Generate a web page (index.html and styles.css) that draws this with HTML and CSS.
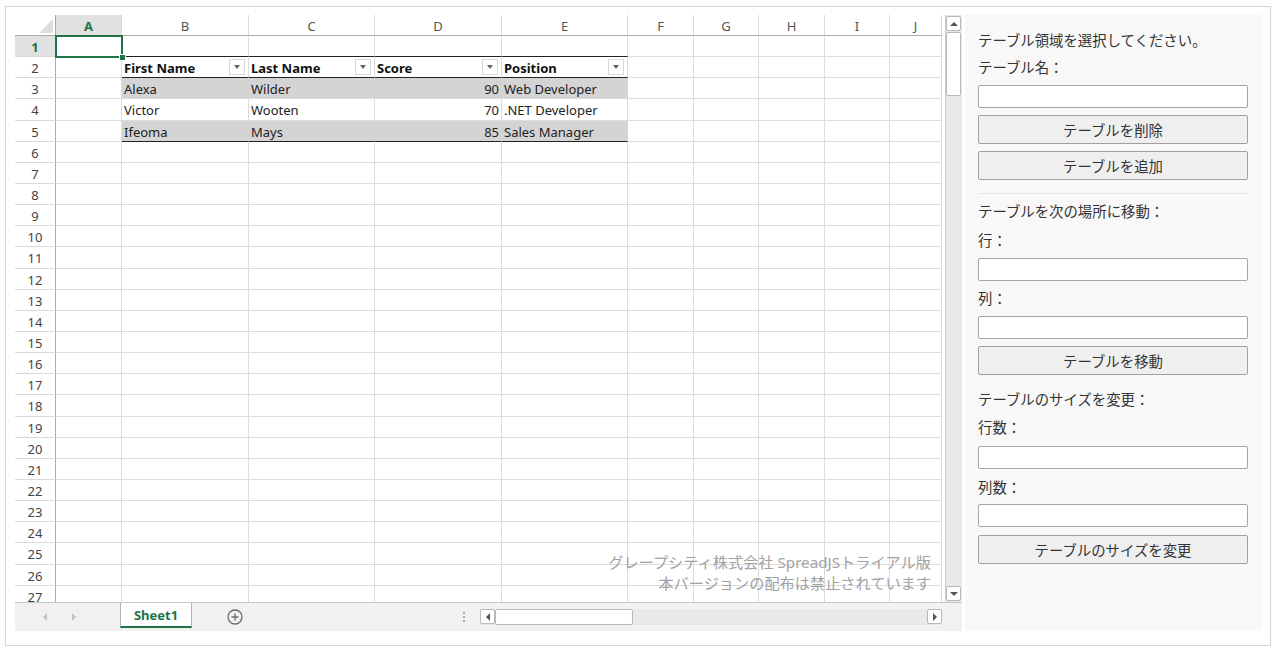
FILE: index.html
```html
<!DOCTYPE html>
<html lang="ja">
<head>
  <meta charset="UTF-8" />
  <meta name="viewport" content="width=device-width, initial-scale=1.0"/>
  <title>テーブルの操作</title>
  <link rel="stylesheet" href="styles.css">
</head>
<body>
  <div class="frame">
    <div class="spread">
      <div class="sheet-area">
        <div class="viewport">
          <div class="grid" id="grid">
            <div class="selection"><span class="handle"></span></div>
          </div>
          <div class="watermark">グレープシティ株式会社 SpreadJSトライアル版<br>本バージョンの配布は禁止されています</div>
        </div>
        <div class="vscroll">
          <div class="sb-btn"><span class="tri up"></span></div>
          <div class="sb-thumb vthumb"></div>
          <div class="sb-track"></div>
          <div class="sb-btn"><span class="tri down"></span></div>
        </div>
      </div>

      <div class="tabbar">
        <div class="tab-nav">
          <span class="tri left light"></span>
          <span class="tri right light"></span>
        </div>
        <div class="tab active-tab">Sheet1</div>
        <div class="tab-add">
          <svg width="16" height="16" viewBox="0 0 16 16">
            <circle cx="8" cy="8" r="7" fill="none" stroke="#6b6b6b" stroke-width="1.3"/>
            <path d="M8 4.5v7M4.5 8h7" stroke="#6b6b6b" stroke-width="1.3"/>
          </svg>
        </div>
        <div class="tab-space"></div>
        <div class="splitter"><i></i><i></i><i></i></div>
        <div class="hscroll">
          <div class="sb-btn"><span class="tri left"></span></div>
          <div class="sb-thumb hthumb"></div>
          <div class="sb-track"></div>
          <div class="sb-btn"><span class="tri right"></span></div>
        </div>
      </div>
    </div>

    <div class="panel">
      <div class="label first">テーブル領域を選択してください。</div>
      <div class="label">テーブル名：</div>
      <input type="text" class="field" />
      <button class="btn">テーブルを削除</button>
      <button class="btn">テーブルを追加</button>
      <hr class="divider" />
      <div class="label">テーブルを次の場所に移動：</div>
      <div class="label gap">行：</div>
      <input type="text" class="field" />
      <div class="label">列：</div>
      <input type="text" class="field" />
      <button class="btn">テーブルを移動</button>
      <div class="label section">テーブルのサイズを変更：</div>
      <div class="label wide">行数：</div>
      <input type="text" class="field wide" />
      <div class="label wide">列数：</div>
      <input type="text" class="field tight" />
      <button class="btn wide">テーブルのサイズを変更</button>
    </div>
  </div>

  <script>
    // table B2:E5
    const tableData = {
      2: ["First Name", "Last Name", "Score", "Position"],
      3: ["Alexa", "Wilder", "90", "Web Developer"],
      4: ["Victor", "Wooten", "70", ".NET Developer"],
      5: ["Ifeoma", "Mays", "85", "Sales Manager"]
    };
    const letters = "ABCDEFGHIJ";
    const grid = document.getElementById("grid");

    function makeRow(cls) {
      const row = document.createElement("div");
      row.className = "grid-row " + cls;
      grid.appendChild(row);
      return row;
    }

    function makeCell(row, cls, text) {
      const cell = document.createElement("div");
      cell.className = cls;
      if (text !== undefined) cell.textContent = text;
      row.appendChild(cell);
      return cell;
    }

    // column header
    const head = makeRow("head-row");
    makeCell(head, "corner");
    for (let c = 0; c < letters.length; c++) {
      makeCell(head, "hdr-col" + (c === 0 ? " active" : ""), letters[c]);
    }

    for (let r = 1; r <= 27; r++) {
      const row = makeRow("body-row");
      makeCell(row, "hdr-row" + (r === 1 ? " active" : ""), r);

      for (let c = 0; c < letters.length; c++) {
        let cls = "cell";
        const inTable = c >= 1 && c <= 4;
        let text;

        if (inTable && r === 1) cls += " t-top";
        if (inTable && tableData[r]) {
          text = tableData[r][c - 1];
          if (r === 2) cls += " t-head";
          if (r === 3 || r === 5) cls += " t-band";
          if (r === 2 || r === 5) cls += " t-bottom";
          if (c === 3 && r > 2) cls += " num";
        }

        const cell = makeCell(row, cls, text);
        if (inTable && r === 2) {
          const btn = document.createElement("span");
          btn.className = "filter";
          cell.appendChild(btn);
        }
      }
    }
  </script>
</body>
</html>
```

FILE: styles.css
```css
body {
  margin: 0;
  background: #fff;
  font-family: "Noto Sans", "Noto Sans CJK JP", sans-serif;
  color: #222;
}

.frame {
  margin: 6px 0 0 5px;
  width: 1266px;
  height: 640px;
  box-sizing: border-box;
  border: 1px solid #d6d6d6;
  padding: 8px 0 0 9px;
  display: flex;
}

/* spreadsheet */

.spread {
  width: 947px;
  height: 616px;
  display: flex;
  flex-direction: column;
}

.sheet-area {
  display: flex;
  height: 587px;
}

.viewport {
  position: relative;
  width: 930px;
  overflow: hidden;
  background: #fff;
}

.grid {
  position: relative;
}

.grid-row {
  display: grid;
  grid-template-columns: 41px 66px 127px 126px 127px 126px 66px 65px 66px 65px 52px;
}

.head-row {
  height: 21px;
}

.body-row {
  height: 21.15px;
}

.grid-row > div {
  box-sizing: border-box;
  font-size: 13px;
  display: flex;
  align-items: center;
  white-space: nowrap;
  overflow: hidden;
}

.body-row > div {
  padding-top: 2px;
}

.corner {
  position: relative;
  border-right: 1px solid #ababab;
  border-bottom: 1px solid #ababab;
}

.corner::after {
  content: "";
  position: absolute;
  right: 2px;
  bottom: 2px;
  border-left: 14px solid transparent;
  border-bottom: 14px solid #dedede;
}

.hdr-col {
  justify-content: center;
  color: #555;
  padding-top: 1px;
  border-right: 1px solid #dadada;
  border-bottom: 1px solid #ababab;
}

.hdr-row {
  justify-content: center;
  color: #444;
  border-right: 1px solid #ababab;
  border-bottom: 1px solid #dadada;
}

.hdr-col.active,
.hdr-row.active {
  background: #e1e1e1;
  color: #217346;
  font-weight: bold;
}

.cell {
  padding: 0 2px;
  border-right: 1px solid #dcdcdc;
  border-bottom: 1px solid #dcdcdc;
  position: relative;
}

.cell.t-top {
  border-bottom-color: #222;
}

.cell.t-head {
  font-weight: bold;
  color: #111;
}

.cell.t-band {
  background: #d4d4d4;
  border-right-color: #d4d4d4;
}

.cell.t-bottom {
  border-bottom-color: #222;
}

.cell.num {
  justify-content: flex-end;
}

.filter {
  position: absolute;
  right: 3px;
  top: 2px;
  width: 16px;
  height: 16px;
  box-sizing: border-box;
  background: #fff;
  border: 1px solid #d8d8d8;
}

.filter::after {
  content: "";
  position: absolute;
  left: 4px;
  top: 5px;
  border-left: 3.5px solid transparent;
  border-right: 3.5px solid transparent;
  border-top: 4px solid #666;
}

.selection {
  position: absolute;
  left: 40px;
  top: 20px;
  width: 68px;
  height: 23px;
  box-sizing: border-box;
  border: 2px solid #217346;
  z-index: 2;
}

.handle {
  position: absolute;
  right: -5px;
  bottom: -5px;
  width: 7px;
  height: 7px;
  box-sizing: border-box;
  background: #217346;
  border: 1px solid #fff;
}

.watermark {
  position: absolute;
  right: 14px;
  top: 537px;
  text-align: right;
  font-family: "Noto Sans", "Noto Sans CJK JP", sans-serif;
  font-size: 15.2px;
  line-height: 21px;
  color: #a2a2a2;
}

/* scrollbars */

.vscroll {
  width: 17px;
  border-left: 1px solid #cfcfcf;
  box-sizing: border-box;
  background: #e9e9e9;
  display: flex;
  flex-direction: column;
  padding: 1px 1px 1px 0;
}

.hscroll {
  width: 462px;
  height: 16px;
  margin-top: 6px;
  background: #e9e9e9;
  display: flex;
}

.sb-btn {
  flex: none;
  width: 15px;
  height: 15px;
  box-sizing: border-box;
  background: #fff;
  border: 1px solid #b8b8b8;
  border-radius: 2px;
  display: flex;
  align-items: center;
  justify-content: center;
}

.sb-thumb {
  flex: none;
  box-sizing: border-box;
  background: #fff;
  border: 1px solid #b8b8b8;
  border-radius: 2px;
}

.vthumb {
  height: 64px;
  margin-top: 1px;
}

.hthumb {
  width: 138px;
}

.sb-track {
  flex: 1;
}

.tri {
  width: 0;
  height: 0;
}

.tri.up {
  border-left: 4px solid transparent;
  border-right: 4px solid transparent;
  border-bottom: 4px solid #555;
}

.tri.down {
  border-left: 4px solid transparent;
  border-right: 4px solid transparent;
  border-top: 4px solid #555;
}

.tri.left {
  border-top: 4px solid transparent;
  border-bottom: 4px solid transparent;
  border-right: 4px solid #555;
}

.tri.right {
  border-top: 4px solid transparent;
  border-bottom: 4px solid transparent;
  border-left: 4px solid #555;
}

.tri.light.left {
  border-right-color: #c4c4c4;
}

.tri.light.right {
  border-left-color: #c4c4c4;
}

/* sheet tabs */

.tabbar {
  height: 29px;
  box-sizing: border-box;
  border-top: 1px solid #c8c8c8;
  background: #f1f1f1;
  display: flex;
  align-items: flex-start;
}

.tab-nav {
  width: 105px;
  height: 28px;
  display: flex;
  align-items: center;
  gap: 25px;
  padding-left: 28px;
  box-sizing: border-box;
}

.tab {
  width: 72px;
  height: 25px;
  box-sizing: border-box;
  display: flex;
  align-items: center;
  justify-content: center;
  font-size: 13px;
  font-weight: bold;
}

.active-tab {
  background: #fff;
  color: #217346;
  border-left: 1px solid #b4b4b4;
  border-right: 1px solid #b4b4b4;
  border-bottom: 2px solid #217346;
}

.tab-add {
  width: 86px;
  height: 28px;
  display: flex;
  align-items: center;
  justify-content: center;
}

.tab-space {
  width: 180px;
}

.splitter {
  width: 12px;
  height: 28px;
  margin-right: 10px;
  display: flex;
  flex-direction: column;
  align-items: center;
  justify-content: center;
  gap: 2px;
}

.splitter i {
  width: 2px;
  height: 2px;
  background: #a8a8a8;
}

/* side panel */

.panel {
  width: 297px;
  height: 616px;
  margin-left: 3px;
  box-sizing: border-box;
  background: #f8f8f8;
  padding: 15px 14px 0 13px;
  font-family: "Noto Sans CJK JP", sans-serif;
  font-size: 14.4px;
  color: #333;
}

.label {
  height: 20px;
  line-height: 20px;
  margin-top: 7px;
  white-space: nowrap;
}

.label.first {
  margin-top: 0;
}

.label.gap {
  margin-top: 9px;
}

.label.section {
  margin-top: 14px;
}

.label.wide {
  margin-top: 8px;
}

.field {
  display: block;
  width: 270px;
  height: 23px;
  box-sizing: border-box;
  margin: 8px 0 0;
  border: 1px solid #a6a6a6;
  border-radius: 2px;
  background: #fff;
  padding: 0 4px;
}

.field.wide {
  margin-top: 9px;
}

.field.tight {
  margin-top: 7px;
}

.btn {
  display: block;
  width: 270px;
  height: 29px;
  box-sizing: border-box;
  margin-top: 7px;
  border: 1px solid #a0a0a0;
  border-radius: 2px;
  background: #efefef;
  font-family: "Noto Sans CJK JP", sans-serif;
  font-size: 14.4px;
  color: #333;
  padding: 0;
}

.btn.wide {
  margin-top: 8px;
}

.divider {
  border: none;
  border-top: 1px solid #e4e4e4;
  width: 270px;
  margin: 13px 0 0;
}
```
